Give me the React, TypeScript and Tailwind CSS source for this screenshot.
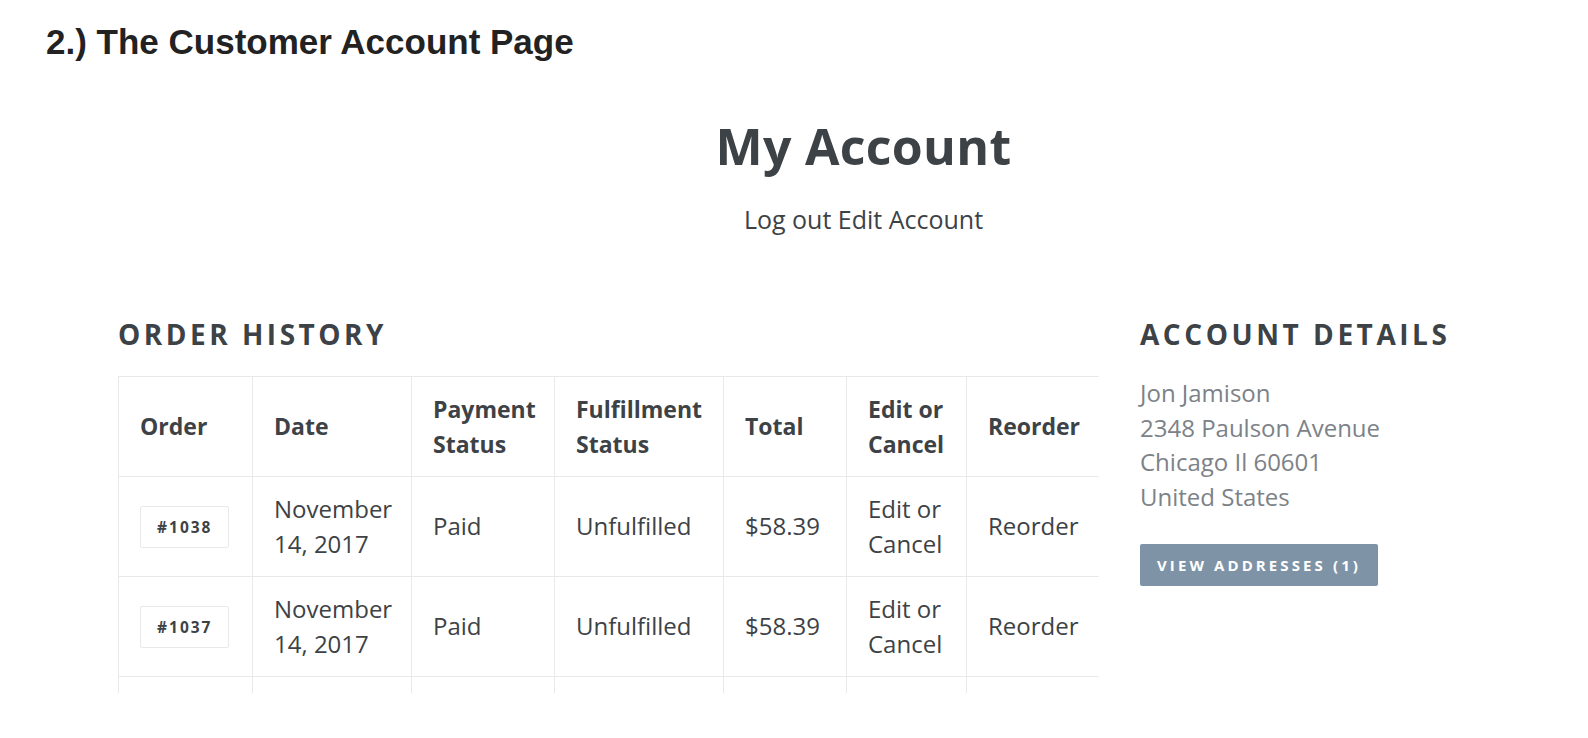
import React from 'react';

const orders = [
  { id: '#1038', date: ['November', '14, 2017'], payment: 'Paid', fulfillment: 'Unfulfilled', total: '$58.39' },
  { id: '#1037', date: ['November', '14, 2017'], payment: 'Paid', fulfillment: 'Unfulfilled', total: '$58.39' },
  { id: '#1036', date: ['November', '14, 2017'], payment: 'Paid', fulfillment: 'Unfulfilled', total: '$58.39' },
];

const colWidths = [134, 159, 143, 169, 123, 120, 133];

export default function App() {
  return (
    <div className="w-full h-[738px] bg-white overflow-hidden text-[#3d4246]" style={{ fontFamily: '"Open Sans", sans-serif' }}>
      {/* screenshot caption */}
      <h1
        className="pl-[46px] pt-[22px] text-[35px] leading-[40px] font-bold text-[#222]"
        style={{ fontFamily: '"Liberation Sans", Arial, sans-serif' }}
      >
        2.) The Customer Account Page
      </h1>

      {/* page header */}
      <div className="flex flex-col items-center pl-[139px] pt-[54px]">
        <h2 className="text-[50px] leading-[60px] font-bold tracking-[0.3px]">My Account</h2>
        <p className="mt-[28px] text-[25px] leading-[30px]">Log out Edit Account</p>
      </div>

      <div className="flex pl-[118px] mt-[85px]">
        {/* order history */}
        <div className="w-[981px] shrink-0">
          <h3 className="text-[28px] leading-[30px] font-bold tracking-[3.5px] uppercase">Order History</h3>
          <div className="mt-[27px] h-[317px] overflow-hidden">
            <table className="border-collapse table-fixed w-[981px]">
              <colgroup>
                {colWidths.map((w, i) => (
                  <col key={i} style={{ width: w }} />
                ))}
              </colgroup>
              <thead>
                <tr className="h-[100px]">
                  {['Order', 'Date', 'Payment Status', 'Fulfillment Status', 'Total', 'Edit or Cancel', 'Reorder'].map((h) => (
                    <th key={h} className="border border-[#e8e9eb] pl-[21px] pr-[8px] text-left align-middle text-[23px] leading-[34.5px] font-bold">
                      {h}
                    </th>
                  ))}
                </tr>
              </thead>
              <tbody>
                {orders.map((o) => (
                  <tr key={o.id} className="h-[100px]">
                    <td className="border border-[#e8e9eb] pl-[21px] align-middle">
                      <span className="inline-block border border-[#e8e9eb] rounded-[2px] px-[16px] py-[7px] text-[15.5px] leading-[26px] font-bold tracking-[2px]">
                        {o.id}
                      </span>
                    </td>
                    <td className="border border-[#e8e9eb] pl-[21px] pr-[6px] align-middle text-[24px] leading-[34.5px]">
                      {o.date[0]}
                      <br />
                      {o.date[1]}
                    </td>
                    <td className="border border-[#e8e9eb] pl-[21px] align-middle text-[24px] leading-[34.5px]">{o.payment}</td>
                    <td className="border border-[#e8e9eb] pl-[21px] align-middle text-[24px] leading-[34.5px]">{o.fulfillment}</td>
                    <td className="border border-[#e8e9eb] pl-[21px] align-middle text-[24px] leading-[34.5px]">{o.total}</td>
                    <td className="border border-[#e8e9eb] pl-[21px] align-middle text-[24px] leading-[34.5px]">
                      Edit or
                      <br />
                      Cancel
                    </td>
                    <td className="border border-[#e8e9eb] pl-[21px] align-middle text-[24px] leading-[34.5px]">Reorder</td>
                  </tr>
                ))}
              </tbody>
            </table>
          </div>
        </div>

        {/* account details */}
        <div className="ml-[41px]">
          <h3 className="text-[28px] leading-[30px] font-bold tracking-[3.55px] uppercase whitespace-nowrap">Account Details</h3>
          <div className="mt-[27px] text-[24px] leading-[34.5px] text-[#7c8287]">
            <p>Jon Jamison</p>
            <p>2348 Paulson Avenue</p>
            <p>Chicago Il 60601</p>
            <p>United States</p>
          </div>
          <button className="mt-[30px] h-[42px] px-[17px] rounded-[2px] bg-[#7f93a6] text-white text-[15px] font-bold tracking-[3.1px] uppercase">
            View Addresses (1)
          </button>
        </div>
      </div>
    </div>
  );
}
